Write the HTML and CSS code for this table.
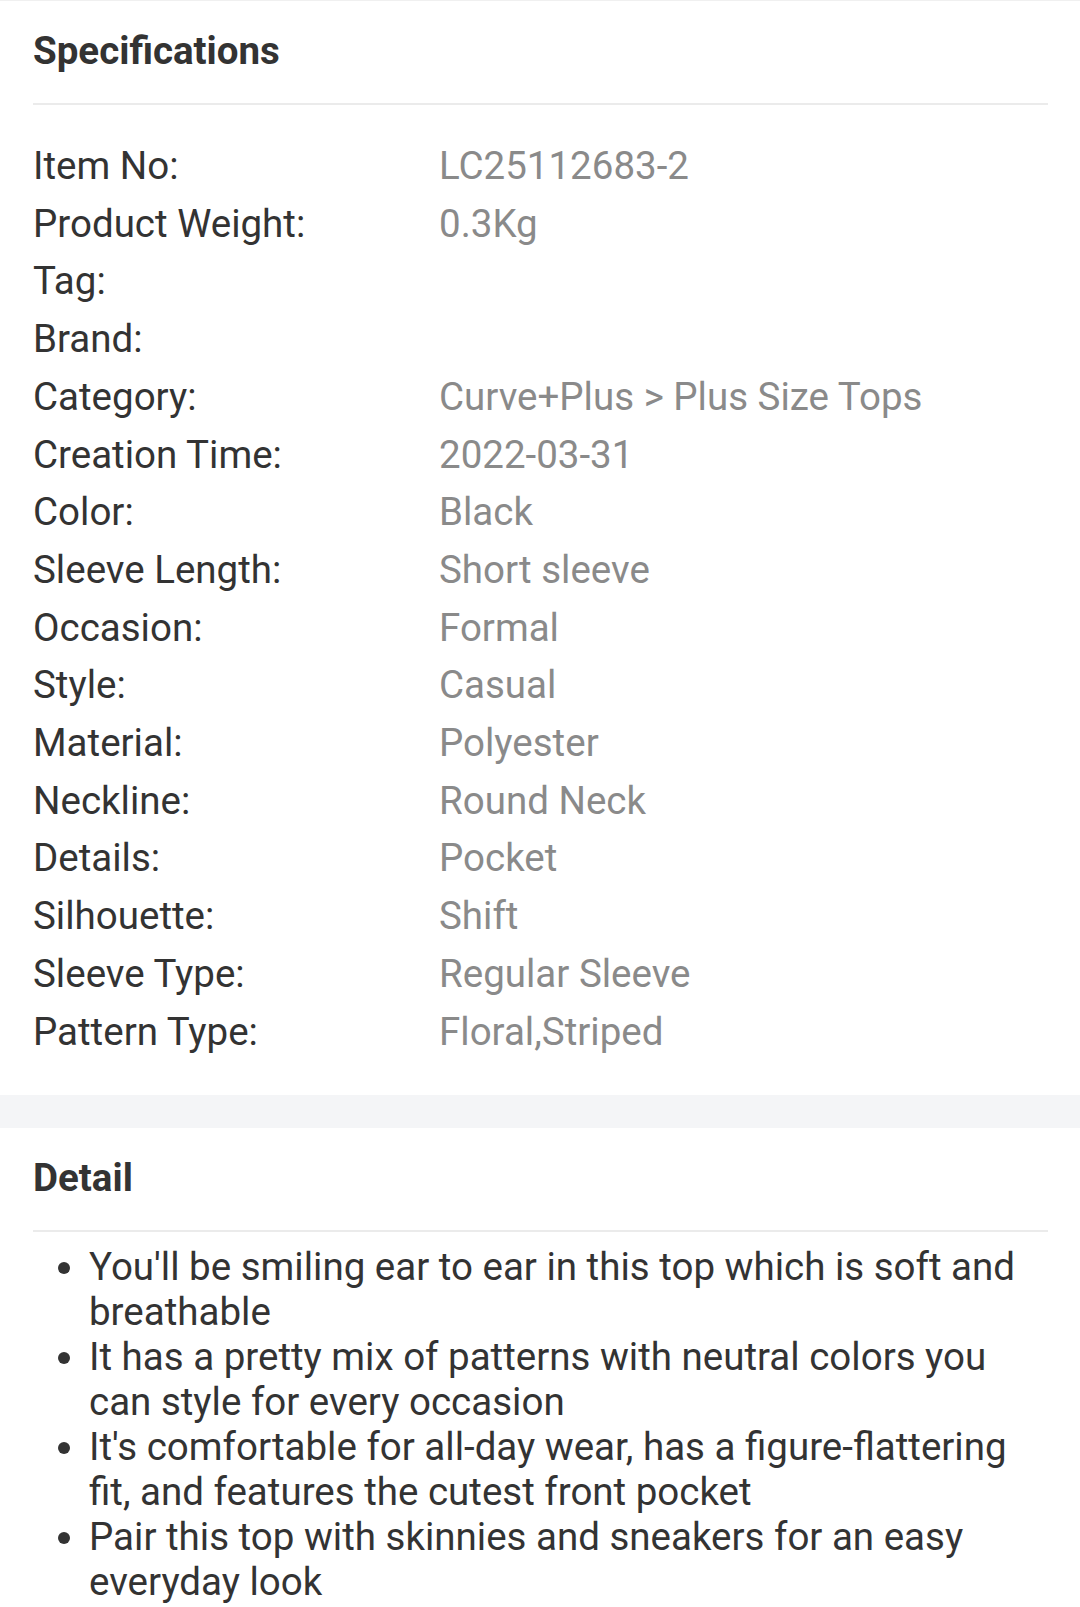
FILE: index.html
```html
<!DOCTYPE html>
<html lang="en">
<head>
<meta charset="utf-8">
<title>Specifications</title>
<link rel="stylesheet" href="styles.css">
</head>
<body>
<section class="panel panel-specs">
  <h2 class="panel-title">Specifications</h2>
  <div class="spec-list">
    <div class="spec-row"><span class="spec-label">Item No:</span><span class="spec-value">LC25112683-2</span></div>
    <div class="spec-row"><span class="spec-label">Product Weight:</span><span class="spec-value">0.3Kg</span></div>
    <div class="spec-row"><span class="spec-label">Tag:</span><span class="spec-value"></span></div>
    <div class="spec-row"><span class="spec-label">Brand:</span><span class="spec-value"></span></div>
    <div class="spec-row"><span class="spec-label">Category:</span><span class="spec-value">Curve+Plus &gt; Plus Size Tops</span></div>
    <div class="spec-row"><span class="spec-label">Creation Time:</span><span class="spec-value">2022-03-31</span></div>
    <div class="spec-row"><span class="spec-label">Color:</span><span class="spec-value">Black</span></div>
    <div class="spec-row"><span class="spec-label">Sleeve Length:</span><span class="spec-value">Short sleeve</span></div>
    <div class="spec-row"><span class="spec-label">Occasion:</span><span class="spec-value">Formal</span></div>
    <div class="spec-row"><span class="spec-label">Style:</span><span class="spec-value">Casual</span></div>
    <div class="spec-row"><span class="spec-label">Material:</span><span class="spec-value">Polyester</span></div>
    <div class="spec-row"><span class="spec-label">Neckline:</span><span class="spec-value">Round Neck</span></div>
    <div class="spec-row"><span class="spec-label">Details:</span><span class="spec-value">Pocket</span></div>
    <div class="spec-row"><span class="spec-label">Silhouette:</span><span class="spec-value">Shift</span></div>
    <div class="spec-row"><span class="spec-label">Sleeve Type:</span><span class="spec-value">Regular Sleeve</span></div>
    <div class="spec-row"><span class="spec-label">Pattern Type:</span><span class="spec-value">Floral,Striped</span></div>
  </div>
</section>
<div class="gap-band"></div>
<section class="panel panel-detail">
  <h2 class="panel-title">Detail</h2>
  <ul class="detail-list">
    <li>You'll be smiling ear to ear in this top which is soft and breathable</li>
    <li>It has a pretty mix of patterns with neutral colors you can style for every occasion</li>
    <li>It's comfortable for all-day wear, has a figure-flattering fit, and features the cutest front pocket</li>
    <li>Pair this top with skinnies and sneakers for an easy everyday look</li>
  </ul>
</section>
</body>
</html>
```
FILE: styles.css
```css
html, body {
  margin: 0;
  padding: 0;
  background: #ffffff;
}

body {
  font-family: Roboto, "Liberation Sans", Arial, sans-serif;
  color: #333333;
  font-size: 38.5px;
}

.panel {
  padding: 0 32px 0 33px;
  background: #ffffff;
}

.panel-specs {
  border-top: 1px solid #f0f0f0;
  padding-bottom: 35px;
}

.panel-title {
  margin: 0;
  font-size: 38.5px;
  font-weight: 700;
  line-height: 45px;
  color: #333333;
  padding: 27px 0 30px;
  border-bottom: 2px solid #ebebeb;
}

.spec-list {
  display: flex;
  flex-direction: column;
  padding-top: 32px;
}

.spec-row {
  display: flex;
  line-height: 57.7px;
  font-size: 38.5px;
}

.spec-label {
  flex: 0 0 40%;
  color: #333333;
}

.spec-value {
  flex: 1 1 auto;
  color: #8a8a8a;
}

.gap-band {
  height: 33px;
  background: #f4f5f7;
}

.detail-list {
  margin: 0;
  padding: 12px 0 0 56px;
  list-style: disc;
  font-size: 38.5px;
  line-height: 45px;
  color: #333333;
}
```
